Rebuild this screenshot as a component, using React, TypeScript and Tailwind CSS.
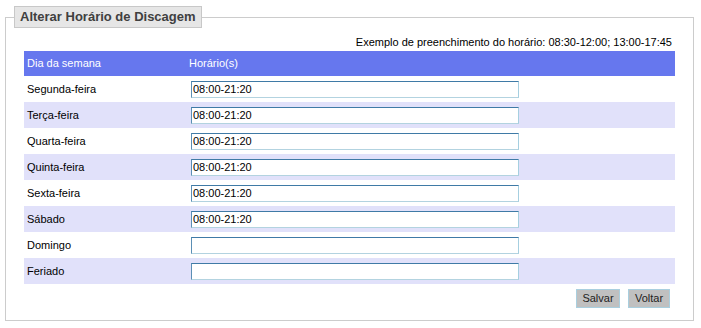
import React from "react";

const rows: { day: string; value: string }[] = [
  { day: "Segunda-feira", value: "08:00-21:20" },
  { day: "Terça-feira", value: "08:00-21:20" },
  { day: "Quarta-feira", value: "08:00-21:20" },
  { day: "Quinta-feira", value: "08:00-21:20" },
  { day: "Sexta-feira", value: "08:00-21:20" },
  { day: "Sábado", value: "08:00-21:20" },
  { day: "Domingo", value: "" },
  { day: "Feriado", value: "" },
];

export default function App() {
  return (
    <div
      className="w-[701px] h-[328px] bg-white pt-[6px] pl-[5px]"
      style={{ fontFamily: '"Liberation Sans", Arial, sans-serif' }}
    >
      <fieldset className="m-0 w-[689px] h-[315px] border border-[#cccccc] px-[8px] pb-0 pt-0 min-w-0">
        <legend className="h-[22px] px-[5px] bg-[#e6e6e6] border border-[#c8c8c8] text-[13px] font-bold text-[#404040] leading-[20px]">
          Alterar Horário de Discagem
        </legend>
        <div className="mx-[10px] mt-[7px]">
          <div className="text-right text-[11px] leading-[14px] text-black pr-[3px]">
            Exemplo de preenchimento do horário: 08:30-12:00; 13:00-17:45
          </div>
          <div className="mt-[2px] grid grid-cols-[164px_1fr] h-[25px] bg-[#6677ee] text-white text-[11px] items-center">
            <div className="pl-[3px]">Dia da semana</div>
            <div className="pl-[1px]">Horário(s)</div>
          </div>
          {rows.map((r, i) => (
            <div
              key={r.day}
              className={`grid grid-cols-[164px_1fr] h-[26px] items-center text-[11px] text-black ${
                i % 2 === 1 ? "bg-[#e1e1fa]" : "bg-white"
              }`}
            >
              <div className="pl-[3px]">{r.day}</div>
              <div className="pl-[3px] flex items-center">
                <input
                  type="text"
                  defaultValue={r.value}
                  className="w-[328px] h-[17px] bg-white border border-t-[#3f7aa6] border-l-[#5b8fb5] border-b-[#b3d3e0] border-r-[#a6cfe0] px-[1px] text-[11px] text-black outline-none"
                  style={{ fontFamily: '"Liberation Sans", Arial, sans-serif' }}
                />
              </div>
            </div>
          ))}
          <div className="flex justify-end gap-[8px] mt-[5px] pr-[5px]">
            <button className="h-[19px] w-[44px] bg-[#c0c0c0] border border-[#a9cfdf] text-[11px] text-[#222] leading-none">
              Salvar
            </button>
            <button className="h-[19px] w-[42px] bg-[#c0c0c0] border border-[#a9cfdf] text-[11px] text-[#222] leading-none">
              Voltar
            </button>
          </div>
        </div>
      </fieldset>
    </div>
  );
}
